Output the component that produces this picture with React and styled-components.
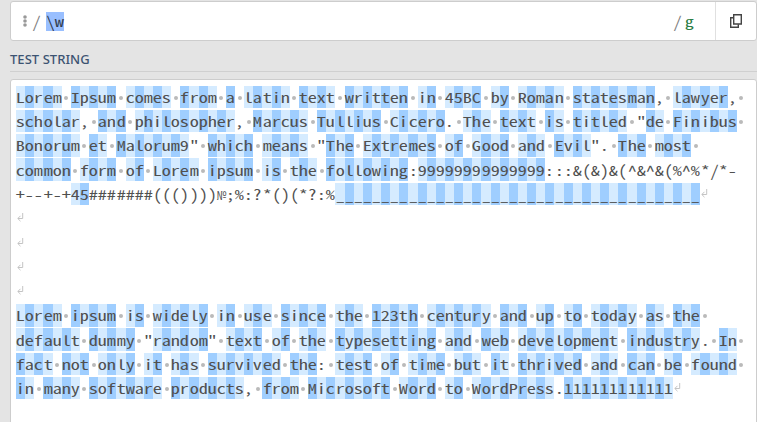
import React from "react";
import styled, { createGlobalStyle } from "styled-components";

const GlobalStyle = createGlobalStyle`
  * { box-sizing: border-box; }
  body { margin: 0; background: #e4e4e4; overflow: hidden; }
`;

const mono = `"Noto Sans Mono CJK SC", "Noto Sans CJK SC", monospace`;

const Page = styled.main`
  height: 422px;
  padding: 1px 0 0 10px;
  display: flex;
  flex-direction: column;
  overflow: hidden;
  background: #e4e4e4;
  color: #505050;
`;

const PatternBar = styled.section`
  display: flex;
  flex: none;
  height: 40px;
  background: #fff;
  border: 1px solid #cdcdcd;
  border-radius: 3px;
`;

const Delimiter = styled.div`
  display: flex;
  align-items: center;
  width: 35px;
  padding-left: 12px;
  gap: 5px;
  color: #808080;
`;

const Pattern = styled.div`
  display: flex;
  align-items: center;
  flex: 1;
`;

const Selection = styled.span`
  display: flex;
  align-items: center;
  height: 19px;
  background: #99bfff;
  color: #303a4c;
`;

const Flags = styled.div`
  display: flex;
  align-items: center;
  width: 42px;
  color: #808080;
`;

const Flag = styled.span`
  display: flex;
  margin-left: 3px;
  color: #2b7d45;
`;

const CopyButton = styled.button`
  display: flex;
  align-items: center;
  justify-content: center;
  width: 41px;
  padding: 0;
  border: 0;
  border-left: 1px solid #e0e0e0;
  background: transparent;
`;

const Heading = styled.h2`
  flex: none;
  height: 31px;
  margin: 0 0 7px;
  padding-top: 9px;
  border-bottom: 1px solid #d0d0d0;
  font: 500 13px/19px "Noto Sans", sans-serif;
  letter-spacing: 0.05px;
  color: #3c5372;
`;

const Editor = styled.section`
  flex: none;
  height: 360px;
  padding: 4.82px 0 0 5px;
  background: #fff;
  border: 1px solid #cdcdcd;
  border-radius: 3px;
`;

const Line = styled.div`
  display: flex;
  align-items: center;
  height: 24.27px;
`;

const tones = { none: "transparent", light: "#d5ebff", dark: "#9fceff" };

const Cell = styled.span`
  display: flex;
  flex: none;
  align-items: center;
  justify-content: center;
  width: 9.127px;
  height: ${(p) => (p.$tone ? 22.5 : 19)}px;
  background: ${(p) => tones[p.$tone || "none"]};
`;

const shapes = {
  normal: { size: 13.7, transform: "scaleX(1.332)" },
  tall: { size: 13.7, transform: "scale(1.25, 1.15)" },
  numero: { size: 11, transform: "scale(0.9, 1.15)" },
  underscore: { size: 13.7, transform: "translateY(0.8px) scaleX(1.332)" },
};

const Letter = styled.span`
  flex: none;
  font: 400 ${(p) => shapes[p.$shape].size}px/20px ${mono};
  font-feature-settings: "hwid";
  transform: ${(p) => shapes[p.$shape].transform};
`;

const SpaceDot = styled.i`
  width: 4px;
  height: 4px;
  margin-top: 2px;
  border-radius: 50%;
  background: #bababa;
`;

const text = [
  "Lorem Ipsum comes from a latin text written in 45BC by Roman statesman, lawyer, ",
  'scholar, and philosopher, Marcus Tullius Cicero. The text is titled "de Finibus ',
  'Bonorum et Malorum9" which means "The Extremes of Good and Evil". The most ',
  "common form of Lorem ipsum is the following:99999999999999:::&(&)&(^&^&(%^%*/*-",
  "+--+-+45#######((())))№;%:?*()(*?:%" + "_".repeat(40) + "\n",
  "\n",
  "\n",
  "\n",
  "\n",
  "Lorem ipsum is widely in use since the 123th century and up to today as the ",
  'default dummy "random" text of the typesetting and web development industry. In ',
  "fact not only it has survived the: test of time but it thrived and can be found ",
  "in many software products, from Microsoft Word to WordPress.111111111111\n",
];

let matches = 0;
const lines = text.map((line) =>
  [...line].map((char) => ({
    char,
    tone: /\w/.test(char) ? (matches++ % 2 ? "dark" : "light") : "none",
  }))
);

const ReturnMark = () => (
  <svg width="7" height="10" viewBox="0 0 7 10" fill="none" stroke="#c4c4c4">
    <path d="M5.7 0v5.5H1M3.5 2.8L.8 5.5l2.7 2.7" />
  </svg>
);

function shapeOf(char) {
  if (char === "№") return "numero";
  if (char === "_") return "underscore";
  return "/\\()".includes(char) ? "tall" : "normal";
}

function Glyph({ char }) {
  if (char === " ") return <SpaceDot />;
  if (char === "\n") return <ReturnMark />;
  return <Letter $shape={shapeOf(char)}>{char}</Letter>;
}

export default function App() {
  return (
    <>
      <GlobalStyle />
      <Page>
        <PatternBar>
          <Delimiter>
            <svg width="4" height="12" viewBox="0 0 4 12" fill="#999">
              <circle cx="2" cy="2" r="1.8" />
              <circle cx="2" cy="6" r="1.8" />
              <circle cx="2" cy="10" r="1.8" />
            </svg>
            <Cell><Glyph char="/" /></Cell>
          </Delimiter>
          <Pattern>
            <Selection>
              <Cell><Glyph char={"\\"} /></Cell>
              <Cell><Glyph char="w" /></Cell>
            </Selection>
          </Pattern>
          <Flags>
            <Cell><Glyph char="/" /></Cell>
            <Flag>
              <Cell><Glyph char="g" /></Cell>
            </Flag>
          </Flags>
          <CopyButton aria-label="Copy">
            <svg width="12" height="14" viewBox="0 0 12 14" fill="none" stroke="#444" strokeWidth="1.4">
              <path d="M3.7.7h7.6v9.3H3.7z" />
              <path d="M3.5 3.7H.7v9.6h7.6V10.2" />
            </svg>
          </CopyButton>
        </PatternBar>
        <Heading>TEST STRING</Heading>
        <Editor>
          {lines.map((cells, row) => (
            <Line key={row}>
              {cells.map(({ char, tone }, column) => (
                <Cell key={column} $tone={tone}>
                  <Glyph char={char} />
                </Cell>
              ))}
            </Line>
          ))}
        </Editor>
      </Page>
    </>
  );
}
